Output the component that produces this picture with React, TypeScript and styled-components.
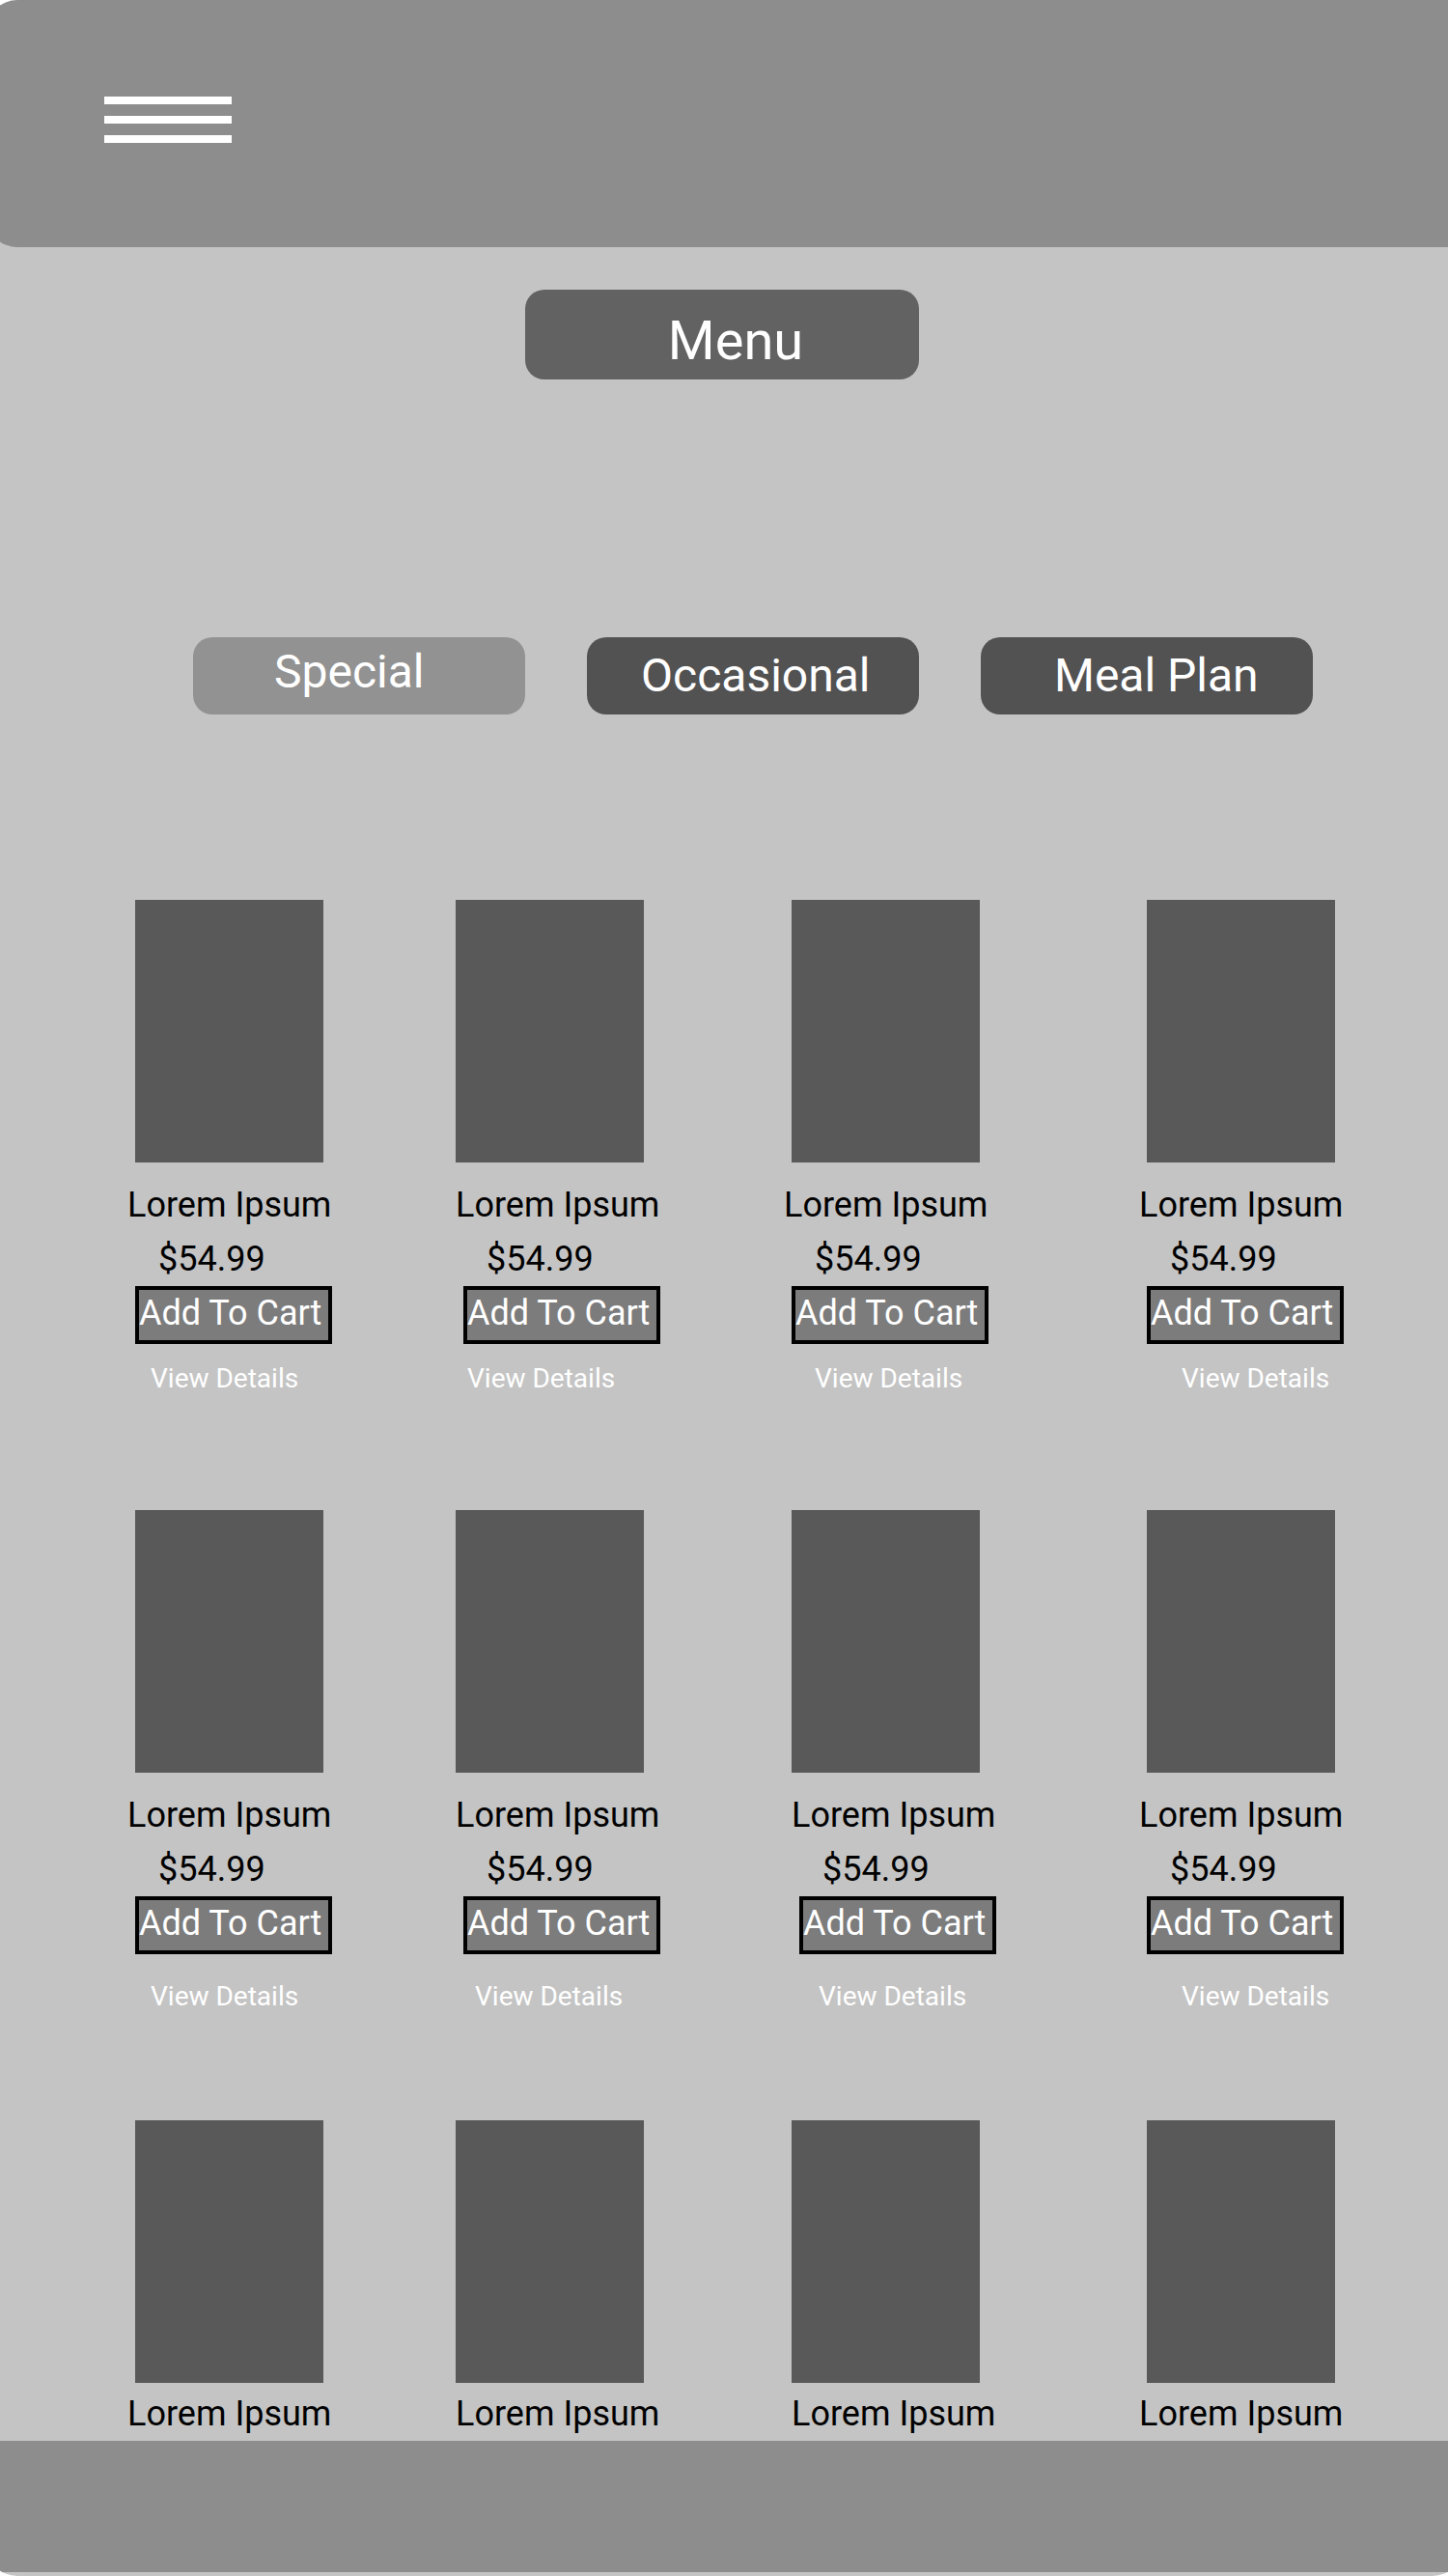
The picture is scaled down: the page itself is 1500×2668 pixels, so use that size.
import React from "react";
import styled, { createGlobalStyle } from "styled-components";

const GlobalStyle = createGlobalStyle`
  *, *::before, *::after { box-sizing: border-box; }
  body {
    margin: 0;
    overflow-x: hidden;
    background: #ffffff;
    font-family: Roboto, "Liberation Sans", sans-serif;
  }
  h1, h2, p { margin: 0; font-weight: 400; }
  button { font-family: inherit; cursor: pointer; }
`;

const Page = styled.div`
  margin: 0 -16px 0 -14px;
  padding-bottom: 4px;
  border-radius: 32px 0 32px 32px;
  background: #c4c4c4;
  overflow: hidden;
`;

const Header = styled.header`
  padding: 100px 122px;
  height: 256px;
  border-radius: 32px 0 0 32px;
  background: #8d8d8d;
`;

const MenuToggle = styled.button`
  display: flex;
  flex-direction: column;
  gap: 12px;
  width: 132px;
  padding: 0;
  border: 0;
  background: none;
`;

const Bar = styled.span`
  height: 8px;
  background: #ffffff;
`;

const Main = styled.main`
  padding: 44px 20px 6px 14px;
`;

const Title = styled.h1`
  width: 408px;
  margin: 0 auto;
  padding: 21px 0 8px 28px;
  border-radius: 20px;
  background: #626262;
  color: #ffffff;
  font-size: 56px;
  line-height: 64px;
  text-align: center;
`;

const Tabs = styled.nav`
  display: flex;
  justify-content: center;
  gap: 64px;
  margin: 267px 0 192px;
  padding-left: 64px;
`;

const Tab = styled.button<{ $active?: boolean; $indent: number }>`
  width: 344px;
  height: 80px;
  padding: ${(p) => (p.$active ? "0 0 8px" : "0")};
  padding-left: ${(p) => p.$indent}px;
  border: 0;
  border-radius: 20px;
  background: ${(p) => (p.$active ? "#929292" : "#525252")};
  color: #ffffff;
  font-size: 48px;
  line-height: 56px;
  text-align: left;
`;

const Row = styled.section`
  display: grid;
  grid-template-columns: 340fr 340fr 368fr 316fr;
  height: 632px;
  padding-left: 132px;

  &:last-child { height: auto; }
`;

const Card = styled.article<{ $shift: number }>`
  display: flex;
  flex-direction: column;
  align-items: flex-start;
  padding-left: ${(p) => p.$shift}px;
`;

const Photo = styled.div<{ $pull: number }>`
  width: 195px;
  height: 272px;
  margin-left: ${(p) => p.$pull}px;
  background: #595959;
`;

const Name = styled.h2<{ $tight?: boolean }>`
  margin-top: ${(p) => (p.$tight ? 10 : 22)}px;
  font-size: 36px;
  line-height: 44px;
  white-space: nowrap;
`;

const Price = styled.p`
  margin: 12px 0 0 32px;
  font-size: 36px;
  line-height: 44px;
`;

const CartButton = styled.button`
  width: 204px;
  height: 60px;
  margin: 6px 0 0 8px;
  padding: 0 0 4px;
  border: 4px solid #000000;
  background: #7c7c7c;
  color: #ffffff;
  font-size: 36px;
  line-height: 44px;
  text-align: left;
  white-space: nowrap;
`;

const Details = styled.a<{ $indent: number; $low?: boolean }>`
  margin: ${(p) => (p.$low ? 26 : 18)}px 0 0 ${(p) => p.$indent}px;
  color: #ffffff;
  font-size: 28px;
  line-height: 36px;
  text-decoration: none;
  white-space: nowrap;
`;

const Footer = styled.footer`
  height: 136px;
  background: #8d8d8d;
`;

type Item = { shift: number; photo: number; details: number };

const rows: Item[][] = [
  [
    { shift: 0, photo: 8, details: 24 },
    { shift: 0, photo: 0, details: 12 },
    { shift: 0, photo: 8, details: 32 },
    { shift: 0, photo: 8, details: 44 },
  ],
  [
    { shift: 0, photo: 8, details: 24 },
    { shift: 0, photo: 0, details: 20 },
    { shift: 8, photo: 0, details: 28 },
    { shift: 0, photo: 8, details: 44 },
  ],
  [
    { shift: 0, photo: 8, details: 0 },
    { shift: 0, photo: 0, details: 0 },
    { shift: 8, photo: 0, details: 0 },
    { shift: 0, photo: 8, details: 0 },
  ],
];

export default function App() {
  return (
    <>
      <GlobalStyle />
      <Page>
        <Header>
          <MenuToggle aria-label="Open navigation">
            <Bar />
            <Bar />
            <Bar />
          </MenuToggle>
        </Header>
        <Main>
          <Title>Menu</Title>
          <Tabs aria-label="Menu categories">
            <Tab $active $indent={84}>Special</Tab>
            <Tab $indent={56}>Occasional</Tab>
            <Tab $indent={76}>Meal Plan</Tab>
          </Tabs>
          {rows.map((items, r) => {
            const preview = r === rows.length - 1;
            return (
              <Row key={r}>
                {items.map((item, c) => (
                  <Card key={c} $shift={item.shift}>
                    <Photo $pull={item.photo} />
                    <Name $tight={preview}>Lorem Ipsum</Name>
                    {!preview && (
                      <>
                        <Price>$54.99</Price>
                        <CartButton>Add To Cart</CartButton>
                        <Details href="#details" $indent={item.details} $low={r > 0}>
                          View Details
                        </Details>
                      </>
                    )}
                  </Card>
                ))}
              </Row>
            );
          })}
        </Main>
        <Footer />
      </Page>
    </>
  );
}
